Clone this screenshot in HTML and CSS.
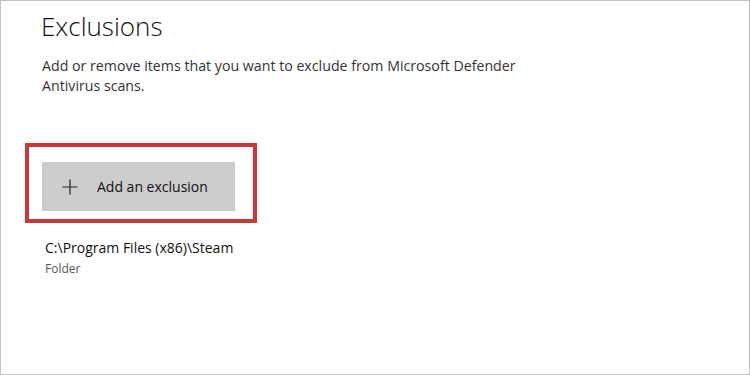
FILE: index.html
```html
<!DOCTYPE html>
<html lang="en">
<head>
    <meta charset="UTF-8">
    <meta name="viewport" content="width=device-width, initial-scale=1.0">
    <title>Exclusions</title>
    <link rel="stylesheet" href="styles.css">
</head>
<body>
    <div class="window">
        <h1 class="page-title">Exclusions</h1>
        <p class="description">Add or remove items that you want to exclude from Microsoft Defender<br>Antivirus scans.</p>

        <div class="highlight-box">
            <button type="button" class="add-btn">
                <svg class="plus-icon" width="16" height="16" viewBox="0 0 16 16">
                    <path d="M8 0.5V15.5M0.5 8H15.5" stroke="#222" stroke-width="1.2" fill="none"/>
                </svg>
                <span>Add an exclusion</span>
            </button>
        </div>

        <div class="exclusion-item">
            <div class="item-path">C:\Program Files (x86)\Steam</div>
            <div class="item-type">Folder</div>
        </div>
    </div>
</body>
</html>
```

FILE: styles.css
```css
body {
    margin: 0;
    font-family: "Open Sans", "Noto Sans", sans-serif;
    background-color: #fff;
    color: #222;
}
.window {
    box-sizing: border-box;
    width: 750px;
    height: 375px;
    border: 1px solid #c3c3c3;
    padding: 0 0 0 40px;
}
.page-title {
    margin: 0;
    padding-top: 7px;
    font-size: 26px;
    font-weight: 300;
    line-height: 36px;
    color: #111;
}
.description {
    margin: 12px 0 0 1px;
    font-size: 14.2px;
    line-height: 20px;
    color: #333;
}
.highlight-box {
    box-sizing: border-box;
    width: 232px;
    height: 80px;
    margin: 47px 0 0 -16px;
    border: 4px solid #c9383a;
    padding: 15px 0 0 13px;
}
.add-btn {
    display: flex;
    align-items: center;
    width: 193px;
    height: 49px;
    padding: 0 0 0 20px;
    border: none;
    background-color: #cccccc;
    font-family: inherit;
    font-size: 14px;
    color: #111;
    cursor: pointer;
}
.plus-icon {
    margin-right: 19px;
}
.exclusion-item {
    margin: 14px 0 0 4px;
}
.item-path {
    font-size: 14px;
    line-height: 22px;
    color: #111;
}
.item-type {
    margin-top: 1px;
    font-size: 12px;
    line-height: 18px;
    color: #555;
}
```
